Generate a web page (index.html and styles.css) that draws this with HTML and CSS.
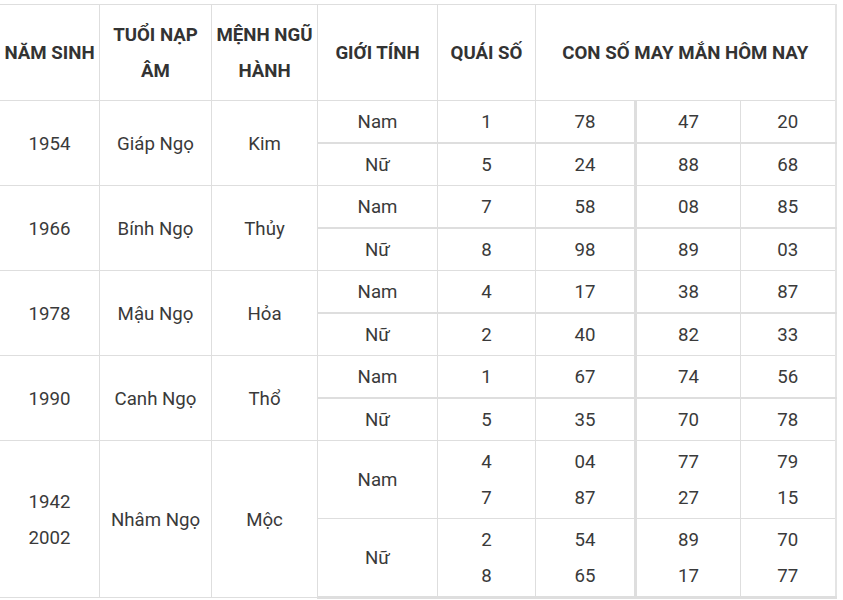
FILE: index.html
```html
<!DOCTYPE html>
<html lang="vi">
<head>
<meta charset="utf-8">
<title>Con số may mắn</title>
<link rel="stylesheet" href="styles.css">
</head>
<body>
<table class="luck">
  <colgroup>
    <col class="c1"><col class="c2"><col class="c3"><col class="c4"><col class="c5"><col class="c6"><col class="c7"><col class="c8">
  </colgroup>
  <thead>
    <tr>
      <th>NĂM SINH</th>
      <th>TUỔI NẠP ÂM</th>
      <th>MỆNH NGŨ HÀNH</th>
      <th>GIỚI TÍNH</th>
      <th>QUÁI SỐ</th>
      <th colspan="3">CON SỐ MAY MẮN HÔM NAY</th>
    </tr>
  </thead>
  <tbody>
    <tr>
      <td rowspan="2">1954</td><td rowspan="2">Giáp Ngọ</td><td rowspan="2">Kim</td>
      <td class="split">Nam</td><td class="split">1</td><td class="split">78</td><td class="split thick">47</td><td class="split">20</td>
    </tr>
    <tr>
      <td>Nữ</td><td>5</td><td>24</td><td class="thick">88</td><td>68</td>
    </tr>
    <tr>
      <td rowspan="2">1966</td><td rowspan="2">Bính Ngọ</td><td rowspan="2">Thủy</td>
      <td class="split">Nam</td><td class="split">7</td><td class="split">58</td><td class="split thick">08</td><td class="split">85</td>
    </tr>
    <tr>
      <td>Nữ</td><td>8</td><td>98</td><td class="thick">89</td><td>03</td>
    </tr>
    <tr>
      <td rowspan="2">1978</td><td rowspan="2">Mậu Ngọ</td><td rowspan="2">Hỏa</td>
      <td class="split">Nam</td><td class="split">4</td><td class="split">17</td><td class="split thick">38</td><td class="split">87</td>
    </tr>
    <tr>
      <td>Nữ</td><td>2</td><td>40</td><td class="thick">82</td><td>33</td>
    </tr>
    <tr>
      <td rowspan="2">1990</td><td rowspan="2">Canh Ngọ</td><td rowspan="2">Thổ</td>
      <td class="split">Nam</td><td class="split">1</td><td class="split">67</td><td class="split thick">74</td><td class="split">56</td>
    </tr>
    <tr>
      <td>Nữ</td><td>5</td><td>35</td><td class="thick">70</td><td>78</td>
    </tr>
    <tr>
      <td rowspan="2">1942<br>2002</td><td rowspan="2">Nhâm Ngọ</td><td rowspan="2">Mộc</td>
      <td>Nam</td><td>4<br>7</td><td>04<br>87</td><td class="thick">77<br>27</td><td>79<br>15</td>
    </tr>
    <tr class="last">
      <td>Nữ</td><td>2<br>8</td><td>54<br>65</td><td class="thick">89<br>17</td><td>70<br>77</td>
    </tr>
  </tbody>
</table>
</body>
</html>
```
FILE: styles.css
```css
html, body {
  margin: 0;
  padding: 0;
  background: #ffffff;
}

body {
  font-family: Roboto, "Liberation Sans", Arial, sans-serif;
  color: #333333;
  overflow: hidden;
}

.luck {
  border-collapse: collapse;
  table-layout: fixed;
  width: 836px;
  margin: 4px 0 0 -1px;
}

.c1 { width: 100px; }
.c2 { width: 112px; }
.c3 { width: 106px; }
.c4 { width: 120px; }
.c5 { width: 98px; }
.c6 { width: 100px; }
.c7 { width: 105px; }
.c8 { width: 95px; }

.luck th,
.luck td {
  border: 1px solid #dedede;
  text-align: center;
  vertical-align: middle;
  line-height: 36px;
  font-size: 14pt;
}

.luck th {
  font-weight: 700;
  color: #333333;
  padding: 11.5px 3px;
}

.luck td {
  font-weight: 400;
  color: #3a3a3a;
  padding: 3px 4px 2px;
}

.luck td.split {
  border-bottom: 2px solid #dedede;
}

.luck td.thick {
  border-left: 3px solid #dedede;
}

.luck tr.last td {
  border-bottom: 3px solid #dedede;
}

.luck th:last-child,
.luck td:last-child {
  border-right: 2px solid #e4e4e4;
}
```
